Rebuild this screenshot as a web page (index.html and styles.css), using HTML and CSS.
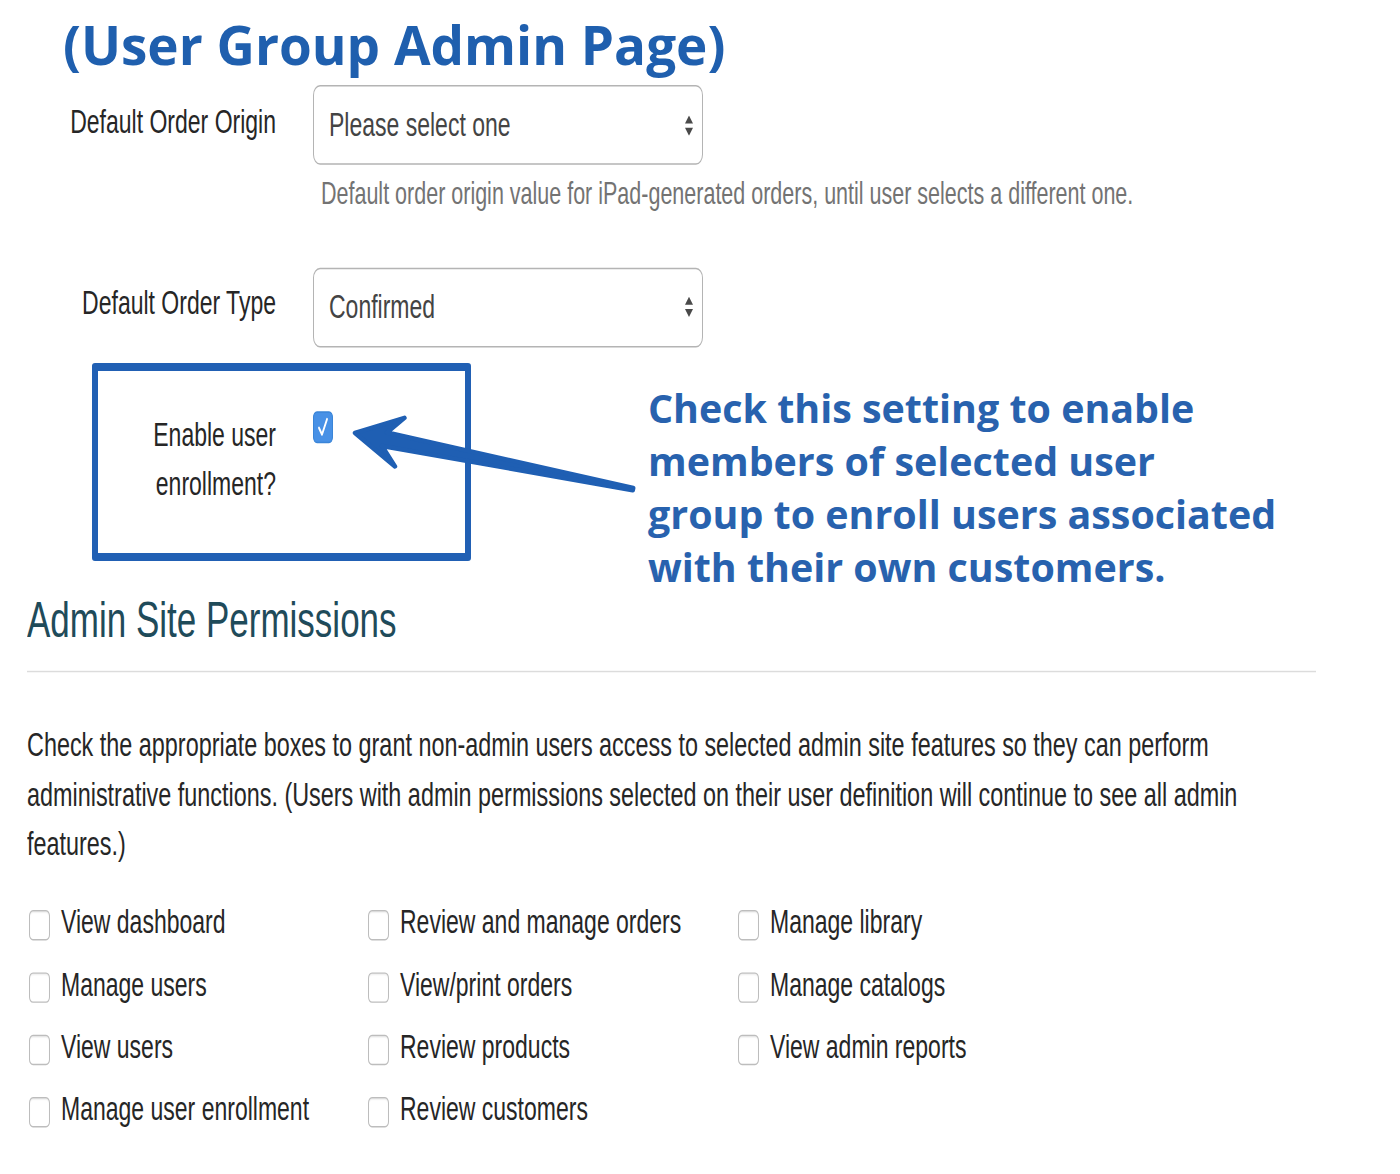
FILE: index.html
```html
<!DOCTYPE html>
<html lang="en">
<head>
<meta charset="utf-8">
<title>User Group Admin Page</title>
<link rel="stylesheet" href="styles.css">
</head>
<body>
<div class="sheet">
  <h1 class="title">(User Group Admin Page)</h1>

  <div class="screen">
    <div class="form-row row-origin">
      <label class="form-label">Default Order Origin</label>
      <div class="control">
        <div class="select">
          <span class="select-value">Please select one</span>
          <svg class="spin" width="8" height="14" viewBox="0 0 8 14"><path d="M0 5.5 L4 0 L8 5.5Z M0 8.5 L8 8.5 L4 14Z" fill="#4a4a4a"/></svg>
        </div>
        <p class="help">Default order origin value for iPad-generated orders, until user selects a different one.</p>
      </div>
    </div>

    <div class="form-row row-type">
      <label class="form-label">Default Order Type</label>
      <div class="control">
        <div class="select">
          <span class="select-value">Confirmed</span>
          <svg class="spin" width="8" height="14" viewBox="0 0 8 14"><path d="M0 5.5 L4 0 L8 5.5Z M0 8.5 L8 8.5 L4 14Z" fill="#4a4a4a"/></svg>
        </div>
      </div>
    </div>

    <div class="form-row row-enroll">
      <label class="form-label multi">Enable user<br>enrollment?</label>
      <div class="control">
        <span class="cb checked"><svg width="20" height="22" viewBox="0 0 20 22"><path d="M6 11.5 L9 16 L14 5.5" fill="none" stroke="#fff" stroke-width="1.8" stroke-linecap="round" stroke-linejoin="round"/></svg></span>
      </div>
    </div>

    <h2 class="section">Admin Site Permissions</h2>
    <hr class="rule">
    <p class="intro">Check the appropriate boxes to grant non-admin users access to selected admin site features so they can perform administrative functions. (Users with admin permissions selected on their user definition will continue to see all admin features.)</p>

    <div class="perms">
      <label class="perm"><span class="cb"></span>View dashboard</label>
      <label class="perm"><span class="cb"></span>Review and manage orders</label>
      <label class="perm"><span class="cb"></span>Manage library</label>
      <label class="perm"><span class="cb"></span>Manage users</label>
      <label class="perm"><span class="cb"></span>View/print orders</label>
      <label class="perm"><span class="cb"></span>Manage catalogs</label>
      <label class="perm"><span class="cb"></span>View users</label>
      <label class="perm"><span class="cb"></span>Review products</label>
      <label class="perm"><span class="cb"></span>View admin reports</label>
      <label class="perm"><span class="cb"></span>Manage user enrollment</label>
      <label class="perm"><span class="cb"></span>Review customers</label>
    </div>
  </div>

  <div class="focus-box"></div>
  <svg class="arrow" width="1400" height="1174" viewBox="0 0 1400 1174">
    <path d="M355 433 L404.5 417.8 L387 432.5 L633.2 488 L632.8 490.2 L382 446 L395 466.4 Z" fill="#1f5fb3" stroke="#1f5fb3" stroke-width="4.5" stroke-linejoin="round"/>
  </svg>
  <p class="callout">Check this setting to enable<br>members of selected user<br>group to enroll users associated<br>with their own customers.</p>
</div>
</body>
</html>
```

FILE: styles.css
```css
html, body {
  margin: 0;
  padding: 0;
  background: #ffffff;
}

.sheet {
  position: relative;
  width: 1400px;
  height: 1174px;
  overflow: hidden;
  background: #ffffff;
  font-family: "Liberation Sans", Arial, Helvetica, sans-serif;
  color: #2b2b2b;
}

.title {
  margin: 0;
  padding: 7px 0 0 63px;
  height: 76px;
  line-height: 76px;
  font-family: "Open Sans", "Liberation Sans", sans-serif;
  font-weight: 700;
  font-size: 53px;
  color: #1f5fae;
  letter-spacing: 0;
}

.screen {
  width: 1289px;
  margin-left: 27px;
  transform: scaleY(1.45);
  transform-origin: 0 0;
}

.form-row {
  display: grid;
  grid-template-columns: 249px 390px;
  column-gap: 37px;
  align-items: start;
}

.row-origin { margin-top: 2px; }
.row-type { margin-top: 37.5px; }
.row-enroll { margin-top: 43.2px; }

.form-label {
  text-align: right;
  font-size: 23px;
  line-height: 27.6px;
  padding-top: 11.5px;
  color: #262626;
}

.form-label.multi {
  padding-top: 0;
  line-height: 34.4px;
}

.select {
  box-sizing: border-box;
  height: 55px;
  border: 1px solid #b4b4b4;
  border-radius: 7px;
  background: #ffffff;
  display: flex;
  align-items: center;
  justify-content: space-between;
  padding: 0 9px 0 15px;
}

.select-value {
  font-size: 23px;
  color: #444444;
}

.spin {
  display: block;
}

.help {
  margin: 7px 0 0 8px;
  font-size: 21.5px;
  line-height: 26px;
  color: #737373;
  white-space: nowrap;
}

.cb {
  box-sizing: border-box;
  display: inline-block;
  flex: none;
  width: 21px;
  height: 21px;
  border: 1px solid #bdbdbd;
  border-radius: 4px;
  background: #ffffff;
  box-shadow: inset 0 1px 1px rgba(0, 0, 0, 0.06);
}

.cb.checked {
  width: 20px;
  height: 22px;
  margin-top: 1px;
  border: 1px solid #3a85d8;
  background: #4891e6;
  box-shadow: none;
  display: block;
}

.cb.checked svg {
  display: block;
  margin: -1px 0 0 -1px;
}

.section {
  margin: 57.6px 0 0 0;
  font-size: 35px;
  line-height: 38.5px;
  font-weight: 400;
  color: #1f4b5a;
}

.rule {
  margin: 15px 0 0 0;
  border: 0;
  border-top: 1px solid #dcdcdc;
  height: 0;
}

.intro {
  margin: 34.4px 0 0 0;
  font-size: 23.4px;
  line-height: 33.8px;
  color: #262626;
}

.perms {
  margin-top: 15.8px;
  display: grid;
  grid-template-columns: 339px 370px auto;
  grid-auto-rows: 43px;
}

.perm {
  display: flex;
  align-items: center;
  gap: 11px;
  font-size: 23px;
  color: #262626;
}

.perm .cb {
  margin-left: 2px;
  margin-top: 3px;
}

.focus-box {
  position: absolute;
  left: 92px;
  top: 363px;
  width: 379px;
  height: 198px;
  box-sizing: border-box;
  border-style: solid;
  border-color: #2160b4;
  border-width: 8px 6px;
  border-radius: 3px;
}

.arrow {
  position: absolute;
  left: 0;
  top: 0;
  pointer-events: none;
}

.callout {
  position: absolute;
  left: 648px;
  top: 382px;
  margin: 0;
  font-family: "Open Sans", "Liberation Sans", sans-serif;
  font-weight: 700;
  font-size: 39.4px;
  line-height: 53px;
  color: #2862ae;
  white-space: nowrap;
}
```
